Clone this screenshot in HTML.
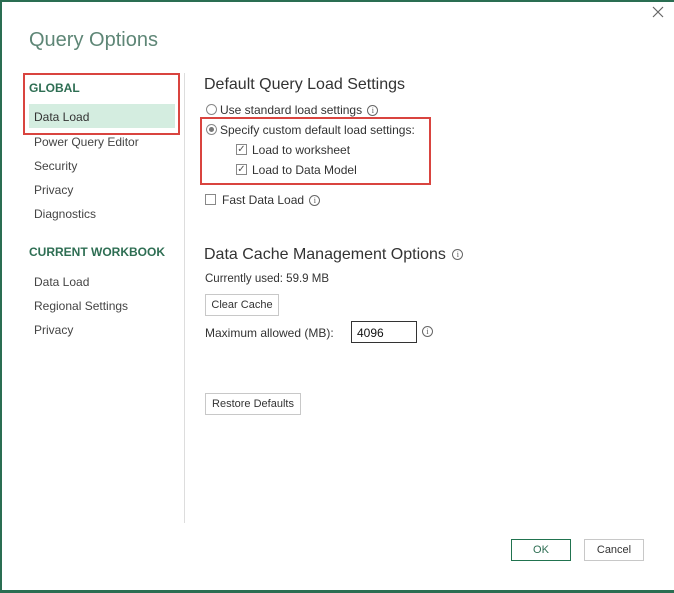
<!DOCTYPE html>
<html><head><style>
*{margin:0;padding:0;box-sizing:border-box}
body{width:674px;height:593px;background:#fff;font-family:"Liberation Sans",sans-serif;color:#333;position:relative;overflow:hidden;font-size:12px}
.a{position:absolute;white-space:nowrap}
.nav{font-size:12px;color:#444}
.t{font-size:12px}
.btn{position:absolute;border:1px solid #c8c8c8;background:#fff;font-size:11px;text-align:center;color:#333}
.info{display:inline-block;width:11px;height:11px;border:1px solid #666;border-radius:50%;font-size:8px;line-height:9px;text-align:center;color:#555;vertical-align:middle;font-family:"Liberation Serif",serif;margin-left:2px}
.cb{position:absolute;width:11px;height:11px;border:1px solid #888;background:#fff}
</style></head><body>
<div class="a" style="left:0;top:0;width:674px;height:2px;background:#2a6e52"></div>
<div class="a" style="left:0;top:0;width:2px;height:593px;background:#2a6e52"></div>
<div class="a" style="left:0;top:590px;width:674px;height:3px;background:#2a6e52"></div>
<svg class="a" style="left:652px;top:6px" width="12" height="12"><path d="M1 1L11 11M11 1L1 11" stroke="#666" stroke-width="1.2"/></svg>
<div class="a" style="left:29px;top:29px;font-size:20px;color:#5e8676">Query Options</div>
<div class="a" style="left:184px;top:73px;width:1px;height:450px;background:#ddd"></div>

<div class="a" style="left:23px;top:73px;width:157px;height:62px;border:2px solid #d9443f"></div>
<div class="a" style="left:29px;top:81px;font-size:12px;font-weight:bold;color:#2e6e53">GLOBAL</div>
<div class="a" style="left:29px;top:104px;width:146px;height:24px;background:#d4ede0"></div>
<div class="a nav" style="left:34px;top:110px;color:#333">Data Load</div>
<div class="a nav" style="left:34px;top:135px">Power Query Editor</div>
<div class="a nav" style="left:34px;top:159px">Security</div>
<div class="a nav" style="left:34px;top:183px">Privacy</div>
<div class="a nav" style="left:34px;top:207px">Diagnostics</div>
<div class="a" style="left:29px;top:245px;font-size:12px;font-weight:bold;color:#2e6e53">CURRENT WORKBOOK</div>
<div class="a nav" style="left:34px;top:275px">Data Load</div>
<div class="a nav" style="left:34px;top:299px">Regional Settings</div>
<div class="a nav" style="left:34px;top:323px">Privacy</div>

<div class="a" style="left:204px;top:76px;font-size:16px;color:#333">Default Query Load Settings</div>
<div class="a" style="left:206px;top:104px;width:11px;height:11px;border:1px solid #888;border-radius:50%"></div>
<div class="a t" style="left:220px;top:103px">Use standard load settings <span class="info">i</span></div>
<div class="a" style="left:200px;top:117px;width:231px;height:68px;border:2px solid #d9443f"></div>
<div class="a" style="left:206px;top:124px;width:11px;height:11px;border:1px solid #888;border-radius:50%"><div style="position:absolute;left:2px;top:2px;width:5px;height:5px;border-radius:50%;background:#777"></div></div>
<div class="a t" style="left:220px;top:123px">Specify custom default load settings:</div>
<div class="cb" style="left:236px;top:144px;font-size:10px;line-height:9px;text-align:center;color:#555">✓</div>
<div class="a t" style="left:252px;top:143px">Load to worksheet</div>
<div class="cb" style="left:236px;top:164px;font-size:10px;line-height:9px;text-align:center;color:#555">✓</div>
<div class="a t" style="left:252px;top:163px">Load to Data Model</div>
<div class="cb" style="left:205px;top:194px"></div>
<div class="a t" style="left:222px;top:193px">Fast Data Load <span class="info">i</span></div>

<div class="a" style="left:204px;top:246px;font-size:16px;color:#333">Data Cache Management Options <span class="info">i</span></div>
<div class="a" style="left:205px;top:273px;font-size:11.5px">Currently used: 59.9 MB</div>
<div class="btn" style="left:205px;top:294px;width:74px;height:22px;line-height:20px">Clear Cache</div>
<div class="a t" style="left:205px;top:326px">Maximum allowed (MB):</div>
<div class="a" style="left:351px;top:321px;width:66px;height:22px;border:1px solid #333;font-size:12px;padding:4px 0 0 5px;color:#111">4096</div>
<div class="a" style="left:420px;top:324px"><span class="info">i</span></div>
<div class="btn" style="left:205px;top:393px;width:96px;height:22px;line-height:20px">Restore Defaults</div>

<div class="btn" style="left:511px;top:539px;width:60px;height:22px;line-height:20px;border-color:#21734f;color:#2e6e53">OK</div>
<div class="btn" style="left:584px;top:539px;width:60px;height:22px;line-height:20px">Cancel</div>
</body></html>
